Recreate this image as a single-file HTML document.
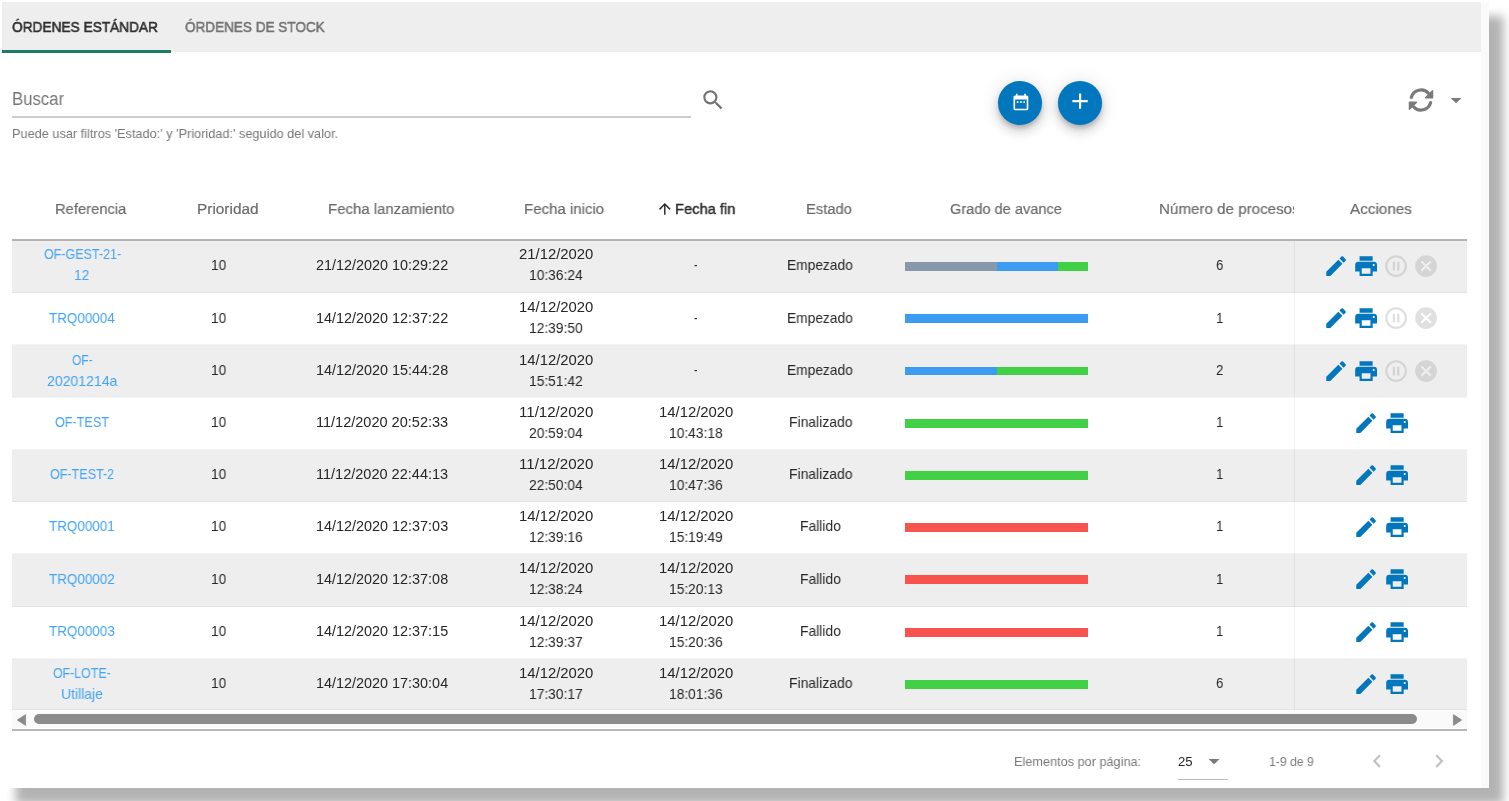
<!DOCTYPE html>
<html lang="es"><head><meta charset="utf-8"><title>Órdenes</title>
<style>
html,body{margin:0;padding:0;background:#fff;overflow:hidden;width:1509px;height:801px}
body{font-family:"Liberation Sans",sans-serif;position:relative}
.panel{position:absolute;left:0;top:0;width:1489px;height:788px;background:#fff;box-shadow:14.5px 16px 9px rgba(0,0,0,.30)}
.abs{position:absolute}
.ic{position:absolute;display:block;overflow:visible}
.t{will-change:transform;position:absolute;white-space:pre;line-height:1;transform-origin:0 0;margin:0;padding:0}
a.t{text-decoration:none}
.tabs{position:absolute;left:2px;top:2px;width:1479px;height:50px;background:#eee}
.slider{position:absolute;left:2px;top:50.3px;width:169.2px;height:2.4px;background:#1c7c6c}
.vtrack{position:absolute;left:1481px;top:2px;width:8px;height:786px;background:#fafafa}
.row{position:absolute;left:12px;width:1455.3px}
.odd{background:#eee}
.sep{position:absolute;left:12px;width:1455.3px;height:1px;background:rgba(0,0,0,.045)}
.actbg{position:absolute;left:1294px;width:173.3px;border-left:1px solid rgba(0,0,0,.05);box-sizing:border-box}
.bar{position:absolute;left:905.1px;width:183.2px;height:8.9px;display:flex}
.bar i{display:block;height:100%}
.g{background:#8797ac}.b{background:#3b9cf1}.v{background:#42d046}.r{background:#f8544d}
.fab{position:absolute;width:43.6px;height:43.6px;border-radius:50%;background:#0277bd;
 box-shadow:0 3.3px 5.5px -1px rgba(0,0,0,.2),0 6.5px 11px 0 rgba(0,0,0,.14),0 1px 19.6px 0 rgba(0,0,0,.12)}
.clipwrap{position:absolute;left:0;top:190px;width:1294px;height:48px;overflow:hidden}
</style></head><body>
<div class="panel">
<main class="table-card">
<nav class="tabs-group">
<div class="tabs"></div><div class="slider"></div>
<span class="t" style="left:11.90px;top:18.82px;font-size:15.4px;color:#303030;transform:scaleX(0.8891);-webkit-text-stroke:0.6px #303030">ÓRDENES ESTÁNDAR</span>
<span class="t" style="left:184.70px;top:18.82px;font-size:15.4px;color:#737373;transform:scaleX(0.8797);-webkit-text-stroke:0.55px #737373">ÓRDENES DE STOCK</span>
</nav>
<div class="chrome-group">
<div class="vtrack"></div>
</div>
<header class="toolbar-group">
<div class="abs" style="left:12px;top:116.1px;width:679.1px;height:1.7px;background:#cdcdcd"></div>
<svg class="ic" style="left:700.10px;top:86.80px;width:26.20px;height:26.20px" viewBox="0 0 24 24"><path fill="#757575" d="M9.5,3A6.5,6.5 0 0,1 16,9.5C16,11.11 15.41,12.59 14.44,13.73L14.71,14H15.5L20.5,19L19,20.5L14,15.5V14.71L13.73,14.44C12.59,15.41 11.11,16 9.5,16A6.5,6.5 0 0,1 3,9.5A6.5,6.5 0 0,1 9.5,3M9.5,5C7,5 5,7 5,9.5C5,12 7,14 9.5,14C12,14 14,12 14,9.5C14,7 12,5 9.5,5Z"/></svg><div class="fab" style="left:998.3px;top:81.1px"></div><div class="fab" style="left:1058.4px;top:81.1px"></div>
<svg class="ic" style="left:1010.90px;top:92.80px;width:19.80px;height:19.80px" viewBox="0 0 24 24"><path fill="#fff" d="M9,10H7V12H9V10M13,10H11V12H13V10M17,10H15V12H17V10M19,3H18V1H16V3H8V1H6V3H5C3.89,3 3,3.9 3,5V19A2,2 0 0,0 5,21H19A2,2 0 0,0 21,19V5A2,2 0 0,0 19,3M19,19H5V8H19V19Z"/></svg><svg class="ic" style="left:1067.00px;top:88.40px;width:26.20px;height:26.20px" viewBox="0 0 24 24"><path fill="#fff" d="M19,13H13V19H11V13H5V11H11V5H13V11H19V13Z"/></svg><svg class="ic" style="left:1408.47px;top:86.82px;width:26px;height:26px" viewBox="-13 -13 26 26"><g><path d="M-9.66,-2.59A10.0,10.0 0 0 1 7.66,-6.43" fill="none" stroke="#7a7a7a" stroke-width="3.2" stroke-linecap="round"/><path d="M11.6,-9.3L11.6,-2.25L4.5,-2.25Z" fill="#7a7a7a" stroke="#7a7a7a" stroke-width="1.3" stroke-linejoin="round"/></g><g transform="rotate(180)"><path d="M-9.66,-2.59A10.0,10.0 0 0 1 7.66,-6.43" fill="none" stroke="#7a7a7a" stroke-width="3.2" stroke-linecap="round"/><path d="M11.6,-9.3L11.6,-2.25L4.5,-2.25Z" fill="#7a7a7a" stroke="#7a7a7a" stroke-width="1.3" stroke-linejoin="round"/></g></svg><svg class="ic" style="left:1443.40px;top:87.05px;width:26.20px;height:26.20px" viewBox="0 0 24 24"><path fill="#7a7a7a" d="M7,10L12,15L17,10H7Z"/></svg>
<span class="t" style="left:12.10px;top:90.60px;font-size:17.6px;color:#757575;transform:scaleX(0.9513)">Buscar</span>
<span class="t" style="left:12.20px;top:126.50px;font-size:13.2px;color:#777;transform:scaleX(0.9655)">Puede usar filtros 'Estado:' y 'Prioridad:' seguido del valor.</span>
</header>
<section class="data-table">
<div class="thead-group">
<div class="abs" style="left:12px;top:239px;width:1455.3px;height:2px;background:#b4b4b4"></div>
<svg class="ic" style="left:656.11px;top:200.00px;width:17.60px;height:17.60px" viewBox="0 0 24 24"><path fill="#2b2b2b" d="M13,20H11V8L5.5,13.5L4.08,12.08L12,4.16L19.92,12.08L18.5,13.5L13,8V20Z"/></svg>
<span class="t" style="left:55.10px;top:201.32px;font-size:15.4px;color:#6b6b6b;transform:scaleX(0.9579);-webkit-text-stroke:0.2px #6b6b6b">Referencia</span>
<span class="t" style="left:196.60px;top:201.32px;font-size:15.4px;color:#6b6b6b;transform:scaleX(0.9920);-webkit-text-stroke:0.2px #6b6b6b">Prioridad</span>
<span class="t" style="left:327.70px;top:201.32px;font-size:15.4px;color:#6b6b6b;transform:scaleX(0.9720);-webkit-text-stroke:0.2px #6b6b6b">Fecha lanzamiento</span>
<span class="t" style="left:524.30px;top:201.32px;font-size:15.4px;color:#6b6b6b;transform:scaleX(0.9753);-webkit-text-stroke:0.2px #6b6b6b">Fecha inicio</span>
<span class="t" style="left:674.60px;top:201.32px;font-size:15.4px;color:#2b2b2b;transform:scaleX(0.9540);-webkit-text-stroke:0.4px #2b2b2b">Fecha fin</span>
<span class="t" style="left:806.10px;top:201.32px;font-size:15.4px;color:#6b6b6b;transform:scaleX(0.9599);-webkit-text-stroke:0.2px #6b6b6b">Estado</span>
<span class="t" style="left:949.90px;top:201.32px;font-size:15.4px;color:#6b6b6b;transform:scaleX(0.9477);-webkit-text-stroke:0.2px #6b6b6b">Grado de avance</span>
<div class="clipwrap"><span class="t" style="left:1158.60px;top:11.32px;font-size:15.4px;color:#6b6b6b;transform:scaleX(0.9847);-webkit-text-stroke:0.2px #6b6b6b">Número de procesos</span></div>
<span class="t" style="left:1350.00px;top:201.32px;font-size:15.4px;color:#6b6b6b;transform:scaleX(0.9895);-webkit-text-stroke:0.2px #6b6b6b">Acciones</span>
</div>
<div class="tr-group">
<div class="row odd" style="top:241.00px;height:51.90px"></div><div class="sep" style="top:291.90px"></div><div class="actbg" style="top:241.00px;height:51.90px"></div><div class="bar" style="top:261.95px"><i class="g" style="width:50.0000%"></i><i class="b" style="width:33.3333%"></i><i class="v" style="width:16.6667%"></i></div><svg class="ic" style="left:1322.90px;top:253.30px;width:26.20px;height:26.20px" viewBox="0 0 24 24"><path fill="#0277bd" d="M20.71,7.04C21.1,6.65 21.1,6 20.71,5.63L18.37,3.29C18,2.9 17.35,2.9 16.96,3.29L15.12,5.12L18.87,8.87M3,17.25V21H6.75L17.81,9.93L14.06,6.18L3,17.25Z"/></svg><svg class="ic" style="left:1353.20px;top:253.30px;width:26.20px;height:26.20px" viewBox="0 0 24 24"><path fill="#0277bd" d="M18,3H6V7H18M19,12A1,1 0 0,1 18,11A1,1 0 0,1 19,10A1,1 0 0,1 20,11A1,1 0 0,1 19,12M16,19H8V14H16M19,8H5A3,3 0 0,0 2,11V17H6V21H18V17H22V11A3,3 0 0,0 19,8Z"/></svg><svg class="ic" style="left:1383.30px;top:253.30px;width:26.20px;height:26.20px" viewBox="0 0 24 24"><path fill="#d4d4d4" d="M13,16V8H15V16H13M9,16V8H11V16H9M12,2A10,10 0 0,1 22,12A10,10 0 0,1 12,22A10,10 0 0,1 2,12A10,10 0 0,1 12,2M12,4A8,8 0 0,0 4,12A8,8 0 0,0 12,20A8,8 0 0,0 20,12A8,8 0 0,0 12,4Z"/></svg><svg class="ic" style="left:1413.40px;top:253.30px;width:26.20px;height:26.20px" viewBox="0 0 24 24"><path fill="#d5d5d5" d="M12,2C17.53,2 22,6.47 22,12C22,17.53 17.53,22 12,22C6.47,22 2,17.53 2,12C2,6.47 6.47,2 12,2M15.59,7L12,10.59L8.41,7L7,8.41L10.59,12L7,15.59L8.41,17L12,13.41L15.59,17L17,15.59L13.41,12L17,8.41L15.59,7Z"/></svg>
<a class="t" style="left:43.52px;top:247.41px;font-size:14.3px;color:#42a5f5;transform:scaleX(0.8749)">OF-GEST-21-</a>
<a class="t" style="left:74.48px;top:268.41px;font-size:14.3px;color:#42a5f5;transform:scaleX(0.9579)">12</a>
<span class="t" style="left:210.98px;top:257.91px;font-size:14.3px;color:#262626;transform:scaleX(0.9579)">10</span>
<span class="t" style="left:316.23px;top:257.91px;font-size:14.3px;color:#262626;transform:scaleX(1.0073)">21/12/2020 10:29:22</span>
<span class="t" style="left:518.53px;top:247.41px;font-size:14.3px;color:#262626;transform:scaleX(1.0388)">21/12/2020</span>
<span class="t" style="left:528.84px;top:268.41px;font-size:14.3px;color:#262626;transform:scaleX(0.9651)">10:36:24</span>
<span class="t" style="left:694.05px;top:257.91px;font-size:14.3px;color:#262626;transform:scaleX(0.6912)">-</span>
<span class="t" style="left:787.43px;top:257.91px;font-size:14.3px;color:#262626;transform:scaleX(0.9618)">Empezado</span>
<span class="t" style="left:1215.74px;top:257.91px;font-size:14.3px;color:#262626;transform:scaleX(0.9212)">6</span>
</div>
<div class="tr-group">
<div class="row" style="top:292.90px;height:52.50px"></div><div class="sep" style="top:344.40px"></div><div class="actbg" style="top:292.90px;height:52.50px"></div><div class="bar" style="top:314.05px"><i class="b" style="width:100.0000%"></i></div><svg class="ic" style="left:1322.90px;top:305.30px;width:26.20px;height:26.20px" viewBox="0 0 24 24"><path fill="#0277bd" d="M20.71,7.04C21.1,6.65 21.1,6 20.71,5.63L18.37,3.29C18,2.9 17.35,2.9 16.96,3.29L15.12,5.12L18.87,8.87M3,17.25V21H6.75L17.81,9.93L14.06,6.18L3,17.25Z"/></svg><svg class="ic" style="left:1353.20px;top:305.30px;width:26.20px;height:26.20px" viewBox="0 0 24 24"><path fill="#0277bd" d="M18,3H6V7H18M19,12A1,1 0 0,1 18,11A1,1 0 0,1 19,10A1,1 0 0,1 20,11A1,1 0 0,1 19,12M16,19H8V14H16M19,8H5A3,3 0 0,0 2,11V17H6V21H18V17H22V11A3,3 0 0,0 19,8Z"/></svg><svg class="ic" style="left:1383.30px;top:305.30px;width:26.20px;height:26.20px" viewBox="0 0 24 24"><path fill="#dfdfdf" d="M13,16V8H15V16H13M9,16V8H11V16H9M12,2A10,10 0 0,1 22,12A10,10 0 0,1 12,22A10,10 0 0,1 2,12A10,10 0 0,1 12,2M12,4A8,8 0 0,0 4,12A8,8 0 0,0 12,20A8,8 0 0,0 20,12A8,8 0 0,0 12,4Z"/></svg><svg class="ic" style="left:1413.40px;top:305.30px;width:26.20px;height:26.20px" viewBox="0 0 24 24"><path fill="#e0e0e0" d="M12,2C17.53,2 22,6.47 22,12C22,17.53 17.53,22 12,22C6.47,22 2,17.53 2,12C2,6.47 6.47,2 12,2M15.59,7L12,10.59L8.41,7L7,8.41L10.59,12L7,15.59L8.41,17L12,13.41L15.59,17L17,15.59L13.41,12L17,8.41L15.59,7Z"/></svg>
<a class="t" style="left:49.23px;top:310.50px;font-size:14.3px;color:#42a5f5;transform:scaleX(0.9401)">TRQ00004</a>
<span class="t" style="left:210.98px;top:310.50px;font-size:14.3px;color:#262626;transform:scaleX(0.9579)">10</span>
<span class="t" style="left:316.23px;top:310.50px;font-size:14.3px;color:#262626;transform:scaleX(1.0073)">14/12/2020 12:37:22</span>
<span class="t" style="left:518.53px;top:300.00px;font-size:14.3px;color:#262626;transform:scaleX(1.0388)">14/12/2020</span>
<span class="t" style="left:528.84px;top:321.00px;font-size:14.3px;color:#262626;transform:scaleX(0.9651)">12:39:50</span>
<span class="t" style="left:694.05px;top:310.50px;font-size:14.3px;color:#262626;transform:scaleX(0.6912)">-</span>
<span class="t" style="left:787.43px;top:310.50px;font-size:14.3px;color:#262626;transform:scaleX(0.9618)">Empezado</span>
<span class="t" style="left:1215.74px;top:310.50px;font-size:14.3px;color:#262626;transform:scaleX(0.9212)">1</span>
</div>
<div class="tr-group">
<div class="row odd" style="top:345.40px;height:52.10px"></div><div class="sep" style="top:396.50px"></div><div class="actbg" style="top:345.40px;height:52.10px"></div><div class="bar" style="top:366.55px"><i class="b" style="width:50.0000%"></i><i class="v" style="width:50.0000%"></i></div><svg class="ic" style="left:1322.90px;top:357.80px;width:26.20px;height:26.20px" viewBox="0 0 24 24"><path fill="#0277bd" d="M20.71,7.04C21.1,6.65 21.1,6 20.71,5.63L18.37,3.29C18,2.9 17.35,2.9 16.96,3.29L15.12,5.12L18.87,8.87M3,17.25V21H6.75L17.81,9.93L14.06,6.18L3,17.25Z"/></svg><svg class="ic" style="left:1353.20px;top:357.80px;width:26.20px;height:26.20px" viewBox="0 0 24 24"><path fill="#0277bd" d="M18,3H6V7H18M19,12A1,1 0 0,1 18,11A1,1 0 0,1 19,10A1,1 0 0,1 20,11A1,1 0 0,1 19,12M16,19H8V14H16M19,8H5A3,3 0 0,0 2,11V17H6V21H18V17H22V11A3,3 0 0,0 19,8Z"/></svg><svg class="ic" style="left:1383.30px;top:357.80px;width:26.20px;height:26.20px" viewBox="0 0 24 24"><path fill="#d4d4d4" d="M13,16V8H15V16H13M9,16V8H11V16H9M12,2A10,10 0 0,1 22,12A10,10 0 0,1 12,22A10,10 0 0,1 2,12A10,10 0 0,1 12,2M12,4A8,8 0 0,0 4,12A8,8 0 0,0 12,20A8,8 0 0,0 20,12A8,8 0 0,0 12,4Z"/></svg><svg class="ic" style="left:1413.40px;top:357.80px;width:26.20px;height:26.20px" viewBox="0 0 24 24"><path fill="#d5d5d5" d="M12,2C17.53,2 22,6.47 22,12C22,17.53 17.53,22 12,22C6.47,22 2,17.53 2,12C2,6.47 6.47,2 12,2M15.59,7L12,10.59L8.41,7L7,8.41L10.59,12L7,15.59L8.41,17L12,13.41L15.59,17L17,15.59L13.41,12L17,8.41L15.59,7Z"/></svg>
<a class="t" style="left:71.71px;top:352.50px;font-size:14.3px;color:#42a5f5;transform:scaleX(0.8438)">OF-</a>
<a class="t" style="left:46.91px;top:373.50px;font-size:14.3px;color:#42a5f5;transform:scaleX(0.9835)">20201214a</a>
<span class="t" style="left:210.98px;top:363.00px;font-size:14.3px;color:#262626;transform:scaleX(0.9579)">10</span>
<span class="t" style="left:316.23px;top:363.00px;font-size:14.3px;color:#262626;transform:scaleX(1.0073)">14/12/2020 15:44:28</span>
<span class="t" style="left:518.53px;top:352.50px;font-size:14.3px;color:#262626;transform:scaleX(1.0388)">14/12/2020</span>
<span class="t" style="left:528.84px;top:373.50px;font-size:14.3px;color:#262626;transform:scaleX(0.9651)">15:51:42</span>
<span class="t" style="left:694.05px;top:363.00px;font-size:14.3px;color:#262626;transform:scaleX(0.6912)">-</span>
<span class="t" style="left:787.43px;top:363.00px;font-size:14.3px;color:#262626;transform:scaleX(0.9618)">Empezado</span>
<span class="t" style="left:1215.74px;top:363.00px;font-size:14.3px;color:#262626;transform:scaleX(0.9212)">2</span>
</div>
<div class="tr-group">
<div class="row" style="top:397.50px;height:52.10px"></div><div class="sep" style="top:448.60px"></div><div class="actbg" style="top:397.50px;height:52.10px"></div><div class="bar" style="top:418.65px"><i class="v" style="width:100.0000%"></i></div><svg class="ic" style="left:1352.90px;top:409.90px;width:26.20px;height:26.20px" viewBox="0 0 24 24"><path fill="#0277bd" d="M20.71,7.04C21.1,6.65 21.1,6 20.71,5.63L18.37,3.29C18,2.9 17.35,2.9 16.96,3.29L15.12,5.12L18.87,8.87M3,17.25V21H6.75L17.81,9.93L14.06,6.18L3,17.25Z"/></svg><svg class="ic" style="left:1383.50px;top:409.90px;width:26.20px;height:26.20px" viewBox="0 0 24 24"><path fill="#0277bd" d="M18,3H6V7H18M19,12A1,1 0 0,1 18,11A1,1 0 0,1 19,10A1,1 0 0,1 20,11A1,1 0 0,1 19,12M16,19H8V14H16M19,8H5A3,3 0 0,0 2,11V17H6V21H18V17H22V11A3,3 0 0,0 19,8Z"/></svg>
<a class="t" style="left:55.13px;top:415.10px;font-size:14.3px;color:#42a5f5;transform:scaleX(0.8821)">OF-TEST</a>
<span class="t" style="left:210.98px;top:415.10px;font-size:14.3px;color:#262626;transform:scaleX(0.9579)">10</span>
<span class="t" style="left:316.23px;top:415.10px;font-size:14.3px;color:#262626;transform:scaleX(1.0155)">11/12/2020 20:52:33</span>
<span class="t" style="left:518.53px;top:404.60px;font-size:14.3px;color:#262626;transform:scaleX(1.0544)">11/12/2020</span>
<span class="t" style="left:528.84px;top:425.60px;font-size:14.3px;color:#262626;transform:scaleX(0.9651)">20:59:04</span>
<span class="t" style="left:658.53px;top:404.60px;font-size:14.3px;color:#262626;transform:scaleX(1.0388)">14/12/2020</span>
<span class="t" style="left:668.84px;top:425.60px;font-size:14.3px;color:#262626;transform:scaleX(0.9651)">10:43:18</span>
<span class="t" style="left:788.54px;top:415.10px;font-size:14.3px;color:#262626;transform:scaleX(0.9746)">Finalizado</span>
<span class="t" style="left:1215.74px;top:415.10px;font-size:14.3px;color:#262626;transform:scaleX(0.9212)">1</span>
</div>
<div class="tr-group">
<div class="row odd" style="top:449.60px;height:52.00px"></div><div class="sep" style="top:500.60px"></div><div class="actbg" style="top:449.60px;height:52.00px"></div><div class="bar" style="top:470.75px"><i class="v" style="width:100.0000%"></i></div><svg class="ic" style="left:1352.90px;top:462.00px;width:26.20px;height:26.20px" viewBox="0 0 24 24"><path fill="#0277bd" d="M20.71,7.04C21.1,6.65 21.1,6 20.71,5.63L18.37,3.29C18,2.9 17.35,2.9 16.96,3.29L15.12,5.12L18.87,8.87M3,17.25V21H6.75L17.81,9.93L14.06,6.18L3,17.25Z"/></svg><svg class="ic" style="left:1383.50px;top:462.00px;width:26.20px;height:26.20px" viewBox="0 0 24 24"><path fill="#0277bd" d="M18,3H6V7H18M19,12A1,1 0 0,1 18,11A1,1 0 0,1 19,10A1,1 0 0,1 20,11A1,1 0 0,1 19,12M16,19H8V14H16M19,8H5A3,3 0 0,0 2,11V17H6V21H18V17H22V11A3,3 0 0,0 19,8Z"/></svg>
<a class="t" style="left:50.03px;top:467.21px;font-size:14.3px;color:#42a5f5;transform:scaleX(0.8778)">OF-TEST-2</a>
<span class="t" style="left:210.98px;top:467.21px;font-size:14.3px;color:#262626;transform:scaleX(0.9579)">10</span>
<span class="t" style="left:316.23px;top:467.21px;font-size:14.3px;color:#262626;transform:scaleX(1.0155)">11/12/2020 22:44:13</span>
<span class="t" style="left:518.53px;top:456.71px;font-size:14.3px;color:#262626;transform:scaleX(1.0544)">11/12/2020</span>
<span class="t" style="left:528.84px;top:477.71px;font-size:14.3px;color:#262626;transform:scaleX(0.9651)">22:50:04</span>
<span class="t" style="left:658.53px;top:456.71px;font-size:14.3px;color:#262626;transform:scaleX(1.0388)">14/12/2020</span>
<span class="t" style="left:668.84px;top:477.71px;font-size:14.3px;color:#262626;transform:scaleX(0.9651)">10:47:36</span>
<span class="t" style="left:788.54px;top:467.21px;font-size:14.3px;color:#262626;transform:scaleX(0.9746)">Finalizado</span>
<span class="t" style="left:1215.74px;top:467.21px;font-size:14.3px;color:#262626;transform:scaleX(0.9212)">1</span>
</div>
<div class="tr-group">
<div class="row" style="top:501.60px;height:52.40px"></div><div class="sep" style="top:553.00px"></div><div class="actbg" style="top:501.60px;height:52.40px"></div><div class="bar" style="top:522.75px"><i class="r" style="width:100.0000%"></i></div><svg class="ic" style="left:1352.90px;top:514.00px;width:26.20px;height:26.20px" viewBox="0 0 24 24"><path fill="#0277bd" d="M20.71,7.04C21.1,6.65 21.1,6 20.71,5.63L18.37,3.29C18,2.9 17.35,2.9 16.96,3.29L15.12,5.12L18.87,8.87M3,17.25V21H6.75L17.81,9.93L14.06,6.18L3,17.25Z"/></svg><svg class="ic" style="left:1383.50px;top:514.00px;width:26.20px;height:26.20px" viewBox="0 0 24 24"><path fill="#0277bd" d="M18,3H6V7H18M19,12A1,1 0 0,1 18,11A1,1 0 0,1 19,10A1,1 0 0,1 20,11A1,1 0 0,1 19,12M16,19H8V14H16M19,8H5A3,3 0 0,0 2,11V17H6V21H18V17H22V11A3,3 0 0,0 19,8Z"/></svg>
<a class="t" style="left:49.23px;top:519.21px;font-size:14.3px;color:#42a5f5;transform:scaleX(0.9401)">TRQ00001</a>
<span class="t" style="left:210.98px;top:519.21px;font-size:14.3px;color:#262626;transform:scaleX(0.9579)">10</span>
<span class="t" style="left:316.23px;top:519.21px;font-size:14.3px;color:#262626;transform:scaleX(1.0073)">14/12/2020 12:37:03</span>
<span class="t" style="left:518.53px;top:508.71px;font-size:14.3px;color:#262626;transform:scaleX(1.0388)">14/12/2020</span>
<span class="t" style="left:528.84px;top:529.71px;font-size:14.3px;color:#262626;transform:scaleX(0.9651)">12:39:16</span>
<span class="t" style="left:658.53px;top:508.71px;font-size:14.3px;color:#262626;transform:scaleX(1.0388)">14/12/2020</span>
<span class="t" style="left:668.84px;top:529.71px;font-size:14.3px;color:#262626;transform:scaleX(0.9651)">15:19:49</span>
<span class="t" style="left:799.87px;top:519.21px;font-size:14.3px;color:#262626;transform:scaleX(0.9700)">Fallido</span>
<span class="t" style="left:1215.74px;top:519.21px;font-size:14.3px;color:#262626;transform:scaleX(0.9212)">1</span>
</div>
<div class="tr-group">
<div class="row odd" style="top:554.00px;height:52.70px"></div><div class="sep" style="top:605.70px"></div><div class="actbg" style="top:554.00px;height:52.70px"></div><div class="bar" style="top:575.15px"><i class="r" style="width:100.0000%"></i></div><svg class="ic" style="left:1352.90px;top:566.40px;width:26.20px;height:26.20px" viewBox="0 0 24 24"><path fill="#0277bd" d="M20.71,7.04C21.1,6.65 21.1,6 20.71,5.63L18.37,3.29C18,2.9 17.35,2.9 16.96,3.29L15.12,5.12L18.87,8.87M3,17.25V21H6.75L17.81,9.93L14.06,6.18L3,17.25Z"/></svg><svg class="ic" style="left:1383.50px;top:566.40px;width:26.20px;height:26.20px" viewBox="0 0 24 24"><path fill="#0277bd" d="M18,3H6V7H18M19,12A1,1 0 0,1 18,11A1,1 0 0,1 19,10A1,1 0 0,1 20,11A1,1 0 0,1 19,12M16,19H8V14H16M19,8H5A3,3 0 0,0 2,11V17H6V21H18V17H22V11A3,3 0 0,0 19,8Z"/></svg>
<a class="t" style="left:49.23px;top:571.60px;font-size:14.3px;color:#42a5f5;transform:scaleX(0.9401)">TRQ00002</a>
<span class="t" style="left:210.98px;top:571.60px;font-size:14.3px;color:#262626;transform:scaleX(0.9579)">10</span>
<span class="t" style="left:316.23px;top:571.60px;font-size:14.3px;color:#262626;transform:scaleX(1.0073)">14/12/2020 12:37:08</span>
<span class="t" style="left:518.53px;top:561.10px;font-size:14.3px;color:#262626;transform:scaleX(1.0388)">14/12/2020</span>
<span class="t" style="left:528.84px;top:582.10px;font-size:14.3px;color:#262626;transform:scaleX(0.9651)">12:38:24</span>
<span class="t" style="left:658.53px;top:561.10px;font-size:14.3px;color:#262626;transform:scaleX(1.0388)">14/12/2020</span>
<span class="t" style="left:668.84px;top:582.10px;font-size:14.3px;color:#262626;transform:scaleX(0.9651)">15:20:13</span>
<span class="t" style="left:799.87px;top:571.60px;font-size:14.3px;color:#262626;transform:scaleX(0.9700)">Fallido</span>
<span class="t" style="left:1215.74px;top:571.60px;font-size:14.3px;color:#262626;transform:scaleX(0.9212)">1</span>
</div>
<div class="tr-group">
<div class="row" style="top:606.70px;height:52.00px"></div><div class="sep" style="top:657.70px"></div><div class="actbg" style="top:606.70px;height:52.00px"></div><div class="bar" style="top:627.85px"><i class="r" style="width:100.0000%"></i></div><svg class="ic" style="left:1352.90px;top:619.10px;width:26.20px;height:26.20px" viewBox="0 0 24 24"><path fill="#0277bd" d="M20.71,7.04C21.1,6.65 21.1,6 20.71,5.63L18.37,3.29C18,2.9 17.35,2.9 16.96,3.29L15.12,5.12L18.87,8.87M3,17.25V21H6.75L17.81,9.93L14.06,6.18L3,17.25Z"/></svg><svg class="ic" style="left:1383.50px;top:619.10px;width:26.20px;height:26.20px" viewBox="0 0 24 24"><path fill="#0277bd" d="M18,3H6V7H18M19,12A1,1 0 0,1 18,11A1,1 0 0,1 19,10A1,1 0 0,1 20,11A1,1 0 0,1 19,12M16,19H8V14H16M19,8H5A3,3 0 0,0 2,11V17H6V21H18V17H22V11A3,3 0 0,0 19,8Z"/></svg>
<a class="t" style="left:49.23px;top:624.31px;font-size:14.3px;color:#42a5f5;transform:scaleX(0.9401)">TRQ00003</a>
<span class="t" style="left:210.98px;top:624.31px;font-size:14.3px;color:#262626;transform:scaleX(0.9579)">10</span>
<span class="t" style="left:316.23px;top:624.31px;font-size:14.3px;color:#262626;transform:scaleX(1.0073)">14/12/2020 12:37:15</span>
<span class="t" style="left:518.53px;top:613.81px;font-size:14.3px;color:#262626;transform:scaleX(1.0388)">14/12/2020</span>
<span class="t" style="left:528.84px;top:634.81px;font-size:14.3px;color:#262626;transform:scaleX(0.9651)">12:39:37</span>
<span class="t" style="left:658.53px;top:613.81px;font-size:14.3px;color:#262626;transform:scaleX(1.0388)">14/12/2020</span>
<span class="t" style="left:668.84px;top:634.81px;font-size:14.3px;color:#262626;transform:scaleX(0.9651)">15:20:36</span>
<span class="t" style="left:799.87px;top:624.31px;font-size:14.3px;color:#262626;transform:scaleX(0.9700)">Fallido</span>
<span class="t" style="left:1215.74px;top:624.31px;font-size:14.3px;color:#262626;transform:scaleX(0.9212)">1</span>
</div>
<div class="tr-group">
<div class="row odd" style="top:658.70px;height:51.40px"></div><div class="sep" style="top:709.10px"></div><div class="actbg" style="top:658.70px;height:51.40px"></div><div class="bar" style="top:679.85px"><i class="v" style="width:100.0000%"></i></div><svg class="ic" style="left:1352.90px;top:671.10px;width:26.20px;height:26.20px" viewBox="0 0 24 24"><path fill="#0277bd" d="M20.71,7.04C21.1,6.65 21.1,6 20.71,5.63L18.37,3.29C18,2.9 17.35,2.9 16.96,3.29L15.12,5.12L18.87,8.87M3,17.25V21H6.75L17.81,9.93L14.06,6.18L3,17.25Z"/></svg><svg class="ic" style="left:1383.50px;top:671.10px;width:26.20px;height:26.20px" viewBox="0 0 24 24"><path fill="#0277bd" d="M18,3H6V7H18M19,12A1,1 0 0,1 18,11A1,1 0 0,1 19,10A1,1 0 0,1 20,11A1,1 0 0,1 19,12M16,19H8V14H16M19,8H5A3,3 0 0,0 2,11V17H6V21H18V17H22V11A3,3 0 0,0 19,8Z"/></svg>
<a class="t" style="left:53.24px;top:665.81px;font-size:14.3px;color:#42a5f5;transform:scaleX(0.8651)">OF-LOTE-</a>
<a class="t" style="left:61.15px;top:686.81px;font-size:14.3px;color:#42a5f5;transform:scaleX(0.9768)">Utillaje</a>
<span class="t" style="left:210.98px;top:676.31px;font-size:14.3px;color:#262626;transform:scaleX(0.9579)">10</span>
<span class="t" style="left:316.23px;top:676.31px;font-size:14.3px;color:#262626;transform:scaleX(1.0073)">14/12/2020 17:30:04</span>
<span class="t" style="left:518.53px;top:665.81px;font-size:14.3px;color:#262626;transform:scaleX(1.0388)">14/12/2020</span>
<span class="t" style="left:528.84px;top:686.81px;font-size:14.3px;color:#262626;transform:scaleX(0.9651)">17:30:17</span>
<span class="t" style="left:658.53px;top:665.81px;font-size:14.3px;color:#262626;transform:scaleX(1.0388)">14/12/2020</span>
<span class="t" style="left:668.84px;top:686.81px;font-size:14.3px;color:#262626;transform:scaleX(0.9651)">18:01:36</span>
<span class="t" style="left:788.54px;top:676.31px;font-size:14.3px;color:#262626;transform:scaleX(0.9746)">Finalizado</span>
<span class="t" style="left:1215.74px;top:676.31px;font-size:14.3px;color:#262626;transform:scaleX(0.9212)">6</span>
</div>
<div class="scroll-group">
<div class="abs" style="left:12px;top:710.3px;width:1455.3px;height:18.2px;background:#fafafa"></div><div class="abs" style="left:33.6px;top:714.1px;width:1383.9px;height:10.4px;border-radius:5.2px;background:#8b8b8b"></div><svg class="ic" style="left:17.4px;top:713.8px;width:9px;height:12px" viewBox="0 0 9 12"><path fill="#8b8b8b" d="M8.6,0.6 L8.6,11.4 L0.3,6Z" stroke="#8b8b8b" stroke-width="0.8" stroke-linejoin="round"/></svg><svg class="ic" style="left:1453.1px;top:713.8px;width:9px;height:12px" viewBox="0 0 9 12"><path fill="#8b8b8b" d="M0.4,0.6 L0.4,11.4 L8.7,6Z" stroke="#8b8b8b" stroke-width="0.8" stroke-linejoin="round"/></svg><div class="abs" style="left:12px;top:728.6px;width:1455.3px;height:2px;background:#b8b8b8"></div>
</div>
</section>
<footer class="footer-group">
<div class="abs" style="left:1178px;top:778.5px;width:49.8px;height:1.4px;background:#bdbdbd"></div><svg class="ic" style="left:1201.20px;top:747.65px;width:26.20px;height:26.20px" viewBox="0 0 24 24"><path fill="#7a7a7a" d="M7,10L12,15L17,10H7Z"/></svg><svg class="ic" style="left:1363.77px;top:747.90px;width:26.20px;height:26.20px" viewBox="0 0 24 24"><path fill="#c2c2c2" d="M15.41,16.58L10.83,12L15.41,7.41L14,6L8,12L14,18L15.41,16.58Z"/></svg><svg class="ic" style="left:1426.12px;top:747.90px;width:26.20px;height:26.20px" viewBox="0 0 24 24"><path fill="#c2c2c2" d="M8.59,16.58L13.17,12L8.59,7.41L10,6L16,12L10,18L8.59,16.58Z"/></svg>
<span class="t" style="left:1013.50px;top:755.00px;font-size:13.2px;color:#7a7a7a;transform:scaleX(0.9631)">Elementos por página:</span>
<span class="t" style="left:1178.30px;top:755.00px;font-size:13.2px;color:#262626;transform:scaleX(0.9678)">25</span>
<span class="t" style="left:1269.20px;top:755.00px;font-size:13.2px;color:#7a7a7a;transform:scaleX(0.9255)">1-9 de 9</span>
</footer>
</main>
</div>
</body></html>
